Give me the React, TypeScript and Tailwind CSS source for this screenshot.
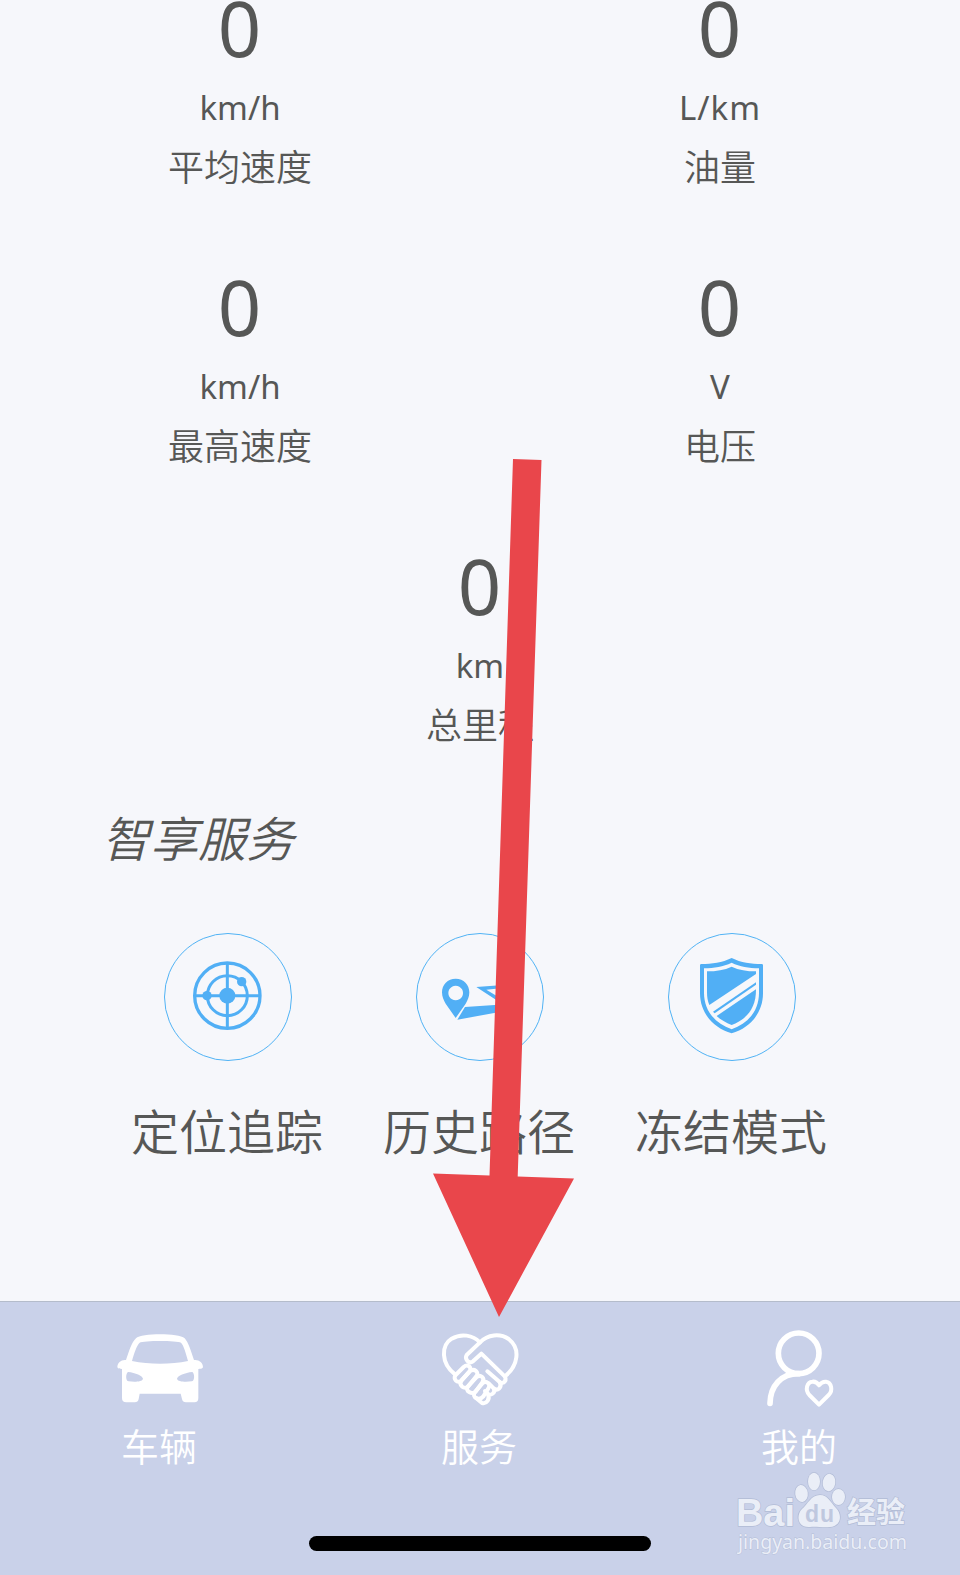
import React from "react";

const stats = [
  { value: "0", unit: "km/h", label: "平均速度", tracking: "" },
  { value: "0", unit: "L/km", label: "油量", tracking: "tracking-[1px]" },
  { value: "0", unit: "km/h", label: "最高速度", tracking: "" },
  { value: "0", unit: "V", label: "电压", tracking: "" },
  { value: "0", unit: "km", label: "总里程", tracking: "" },
];

const RadarIcon = () => (
  <svg className="h-[160px] w-[160px] shrink-0" viewBox="-6 -9 480 480" fill="none" stroke="#51aff5">
    <circle cx="232" cy="227" r="98" strokeWidth="10" />
    <circle cx="232" cy="227" r="60" strokeWidth="9" />
    <path d="M232 129V325M134 227H330" strokeWidth="9" />
    <g fill="#51aff5" stroke="none">
      <circle cx="232" cy="227" r="24" />
      <circle cx="171" cy="227" r="14" />
      <circle cx="275" cy="185" r="14" />
    </g>
  </svg>
);

const RouteIcon = () => (
  <svg className="h-[160px] w-[160px] shrink-0" viewBox="0 -9 480 480" fill="#51aff5">
    <path
      fillRule="evenodd"
      d="M167 176c24 0 41 18 41 41 0 13-5 24-11 34l-30 43-30-43c-6-10-11-21-11-34 0-23 17-41 41-41zm0 21a22 22 0 1 0 .1 0z"
    />
    <path d="M172 299l23-38 100-7v23z" />
    <path fillRule="evenodd" d="M229 201l110-8v80zM259 209l50 30v-35z" />
  </svg>
);

const ShieldIcon = () => (
  <svg className="h-[160px] w-[160px] shrink-0" viewBox="6 -9 480 480" fill="#51aff5">
    <path
      fillRule="evenodd"
      d="M245 114c28 14 58 18 90 18q4 0 4 4v84c0 58-38 104-94 120-56-16-95-62-95-120v-84q0-4 4-4c32 0 62-4 91-18zm0 14c-26 12-52 16-83 17v73c0 54 33 92 83 110 50-18 82-56 82-110v-73c-31-1-57-5-82-17z"
    />
    <path d="M245 140c22 10 45 14 73 14v8L178 255c-5-11-7-24-7-38v-63c28 0 52-4 74-14z" />
    <path d="M318 187v7L194 280l-5-5z" />
    <path d="M318 208c0 54-24 88-73 107-17-7-33-15-45-27z" />
  </svg>
);

const CarIcon = () => (
  <svg className="h-[76px] w-[120px]" viewBox="0 60 360 228" fill="#fff">
    <path
      fillRule="evenodd"
      d="M108 85C124 69 236 69 254 85 265 96 273 124 282 150 296 148 309 157 309 172 306 178 301 176 295 177V264Q295 277 283 277H258Q248 277 246 267L242 251H119L116 267Q114 277 104 277H79Q66 277 66 264V177C60 176 55 178 52 172 52 157 65 148 78 150 87 124 95 96 108 85zM119 98C110 106 102 131 96 153 148 164 213 164 264 153 258 131 251 105 243 98 231 91 130 91 119 98zM84 186C77 190 76 213 86 214 103 216 127 216 129 206 128 198 106 188 84 186zM277 186C284 190 285 213 275 214 258 216 233 216 231 206 232 198 255 188 277 186z"
    />
  </svg>
);

const HandshakeIcon = () => (
  <svg
    className="h-[76px] w-[120px]"
    viewBox="0 120 360 228"
    fill="none"
    stroke="#fff"
    strokeWidth="12"
    strokeLinecap="round"
    strokeLinejoin="round"
  >
    <path d="M105 250C62 217 63 163 95 143 124 126 158 132 180 154L140 192C133 204 146 220 159 211L184 188 252 254C264 266 250 282 239 273L202 241" />
    <path d="M180 154C203 130 240 126 266 144 304 174 292 225 257 254" />
    <path d="M239 273C248 290 232 302 221 292L207 278M221 292C228 306 211 316 203 308L195 300M203 308C212 325 199 340 186 336L168 321" />
    <path d="M107 252L131 228C143 217 157 230 149 241L124 269C113 279 97 264 107 252z" />
    <path d="M124 269L149 241C162 230 179 243 169 256L145 286C133 298 115 283 124 269z" />
    <path d="M143 287L169 259C181 248 196 261 187 274L167 302C155 312 135 300 143 287z" />
    <path d="M164 304L187 277C199 266 214 280 205 292L190 316C177 331 155 319 164 304z" />
  </svg>
);

const ProfileIcon = () => (
  <svg
    className="h-[80px] w-[120px]"
    viewBox="0 55 360 240"
    fill="none"
    stroke="#fff"
    strokeWidth="17"
    strokeLinecap="round"
    strokeLinejoin="round"
  >
    <circle cx="176" cy="131" r="61" />
    <path d="M176 192C123 192 91 229 90 281" />
    <path
      d="M237 285L208 256C194 241 201 217 217 216 227 215 233 220 237 227 242 220 248 215 258 216 274 218 280 242 266 256z"
      strokeWidth="12"
    />
  </svg>
);

const services = [
  { label: "定位追踪", icon: <RadarIcon /> },
  { label: "历史路径", icon: <RouteIcon /> },
  { label: "冻结模式", icon: <ShieldIcon /> },
];

const tabs = [
  { label: "车辆", icon: <CarIcon />, spacing: "pt-[28px]" },
  { label: "服务", icon: <HandshakeIcon />, spacing: "pt-[29px]" },
  { label: "我的", icon: <ProfileIcon />, spacing: "pt-[26px]" },
];

type StatProps = { value: string; unit: string; label: string; tracking: string };

const Stat = ({ value, unit, label, tracking }: StatProps) => (
  <div className="flex h-[279px] flex-col items-center">
    <div className="pr-px text-[76px] leading-[54px] font-normal">{value}</div>
    <div className={`mt-[29px] text-[33px] leading-[48px] font-normal ${tracking}`}>{unit}</div>
    <div className="mt-[10px] text-[36px] leading-[52px]">{label}</div>
  </div>
);

const Watermark = () => (
  <div className="absolute left-[710px] top-[1460px] h-[110px] w-[220px]">
    <svg className="h-full w-full" viewBox="0 0 220 110" fill="#eaeef7">
      <g stroke="#b2bcd6" strokeWidth="1.400" paintOrder="stroke">
        <ellipse cx="91.500" cy="33.500" rx="6.300" ry="8.500" transform="rotate(-8 91.500 33.500)" />
        <ellipse cx="104" cy="21.500" rx="6" ry="8.700" />
        <ellipse cx="119" cy="22.500" rx="6.300" ry="8.700" transform="rotate(8 119 22.500)" />
        <ellipse cx="128.500" cy="37" rx="6.500" ry="8" />
        <path d="M110 35c8 0 11 8 16 13 6 6 6 18-6 19-7 1-14-1-20 0-13 1-14-12-8-18 6-5 9-14 18-14z" />
        <g fontFamily="Liberation Sans, Noto Sans CJK SC, sans-serif" fontWeight="bold">
          <text x="26" y="65.500" fontSize="39" textLength="59" lengthAdjust="spacingAndGlyphs">Bai</text>
          <text x="137" y="63" fontSize="29" textLength="58" lengthAdjust="spacingAndGlyphs">经验</text>
        </g>
        <text
          x="28"
          y="88.500"
          fontFamily="Noto Sans, sans-serif"
          fontWeight="400"
          fontSize="19.500"
          textLength="169"
          lengthAdjust="spacingAndGlyphs"
          strokeWidth="0.8"
        >
          jingyan.baidu.com
        </text>
      </g>
      <text x="95" y="61.500" fontFamily="Liberation Sans, sans-serif" fontWeight="bold" fontSize="23" fill="#bfc8df" textLength="29">
        du
      </text>
    </svg>
  </div>
);

const App = () => {
  return (
    <div className="relative flex h-[1575px] w-[960px] flex-col overflow-hidden bg-[#f6f7fb] font-['Noto_Sans','Noto_Sans_CJK_SC',sans-serif] font-[350] text-[#565756]">
      <div className="grid h-[558px] shrink-0 grid-cols-2 pt-px">
        {stats.slice(0, 4).map((stat, i) => (
          <Stat key={i} {...stat} />
        ))}
      </div>
      <div className="h-[245px] shrink-0 pt-px">
        <Stat {...stats[4]} />
      </div>

      <h2 className="ml-[102px] text-[48px] leading-[72px] italic">智享服务</h2>

      <div className="mx-auto mt-[58px] grid w-[756px] grid-cols-3">
        {services.map((service) => (
          <div key={service.label} className="flex flex-col items-center">
            <div className="flex h-32 w-32 items-center justify-center rounded-full border border-[#51b3f5]">
              {service.icon}
            </div>
            <div className="mt-[35px] pr-[2px] text-[48px] leading-[72px]">{service.label}</div>
          </div>
        ))}
      </div>

      <div className="mt-auto flex h-[274px] flex-col items-center border-t border-[#b4bccb] bg-[#c9d1e9] text-white">
        <div className="grid w-full grid-cols-3">
          {tabs.map((tab) => (
            <div key={tab.label} className="flex flex-col items-center">
              <div className={`flex h-[106px] items-start ${tab.spacing}`}>{tab.icon}</div>
              <div className="mt-[10px] pr-[2px] text-[38px] leading-[56px]">{tab.label}</div>
            </div>
          ))}
        </div>
        <div className="mt-auto mb-6 h-[15px] w-[342px] rounded-full bg-black" />
      </div>

      <Watermark />

      <svg className="absolute inset-0 h-full w-full" viewBox="0 0 960 1575">
        <path d="M513 459l28.500 1L517.700 1176.500 574 1178.500 499 1317 433 1173.500l56.500 2z" fill="#e9464b" />
      </svg>
    </div>
  );
};

export default App;
